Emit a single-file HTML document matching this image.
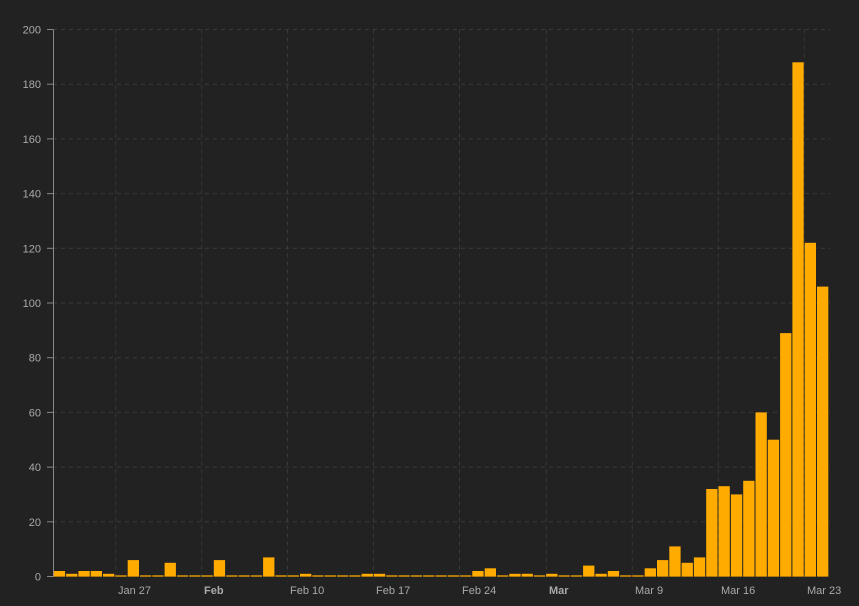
<!DOCTYPE html><html><head><style>html,body{margin:0;background:#222;}svg{display:block}text{font-family:"Liberation Sans",sans-serif;font-size:11px;fill:#a9a9a9}</style></head><body>
<svg width="859" height="606" viewBox="0 0 859 606">
<rect width="859" height="606" fill="#222"/>
<g stroke="#3a3a3a" stroke-dasharray="4,4" stroke-width="1">
<line x1="53" x2="830" y1="29.5" y2="29.5"/><line x1="53" x2="830" y1="84.2" y2="84.2"/><line x1="53" x2="830" y1="138.9" y2="138.9"/><line x1="53" x2="830" y1="193.6" y2="193.6"/><line x1="53" x2="830" y1="248.3" y2="248.3"/><line x1="53" x2="830" y1="303" y2="303"/><line x1="53" x2="830" y1="357.7" y2="357.7"/><line x1="53" x2="830" y1="412.4" y2="412.4"/><line x1="53" x2="830" y1="467.1" y2="467.1"/><line x1="53" x2="830" y1="521.8" y2="521.8"/>
<line x1="115.7" x2="115.7" y1="29.5" y2="582"/><line x1="201.7" x2="201.7" y1="29.5" y2="582"/><line x1="287.5" x2="287.5" y1="29.5" y2="582"/><line x1="373.5" x2="373.5" y1="29.5" y2="582"/><line x1="459.5" x2="459.5" y1="29.5" y2="582"/><line x1="546.3" x2="546.3" y1="29.5" y2="582"/><line x1="632.3" x2="632.3" y1="29.5" y2="582"/><line x1="718.3" x2="718.3" y1="29.5" y2="582"/><line x1="804.3" x2="804.3" y1="29.5" y2="582"/>
</g>
<g stroke="#888" stroke-width="1"><line x1="53.5" x2="53.5" y1="29.5" y2="577"/>
<line x1="47" x2="53" y1="29.5" y2="29.5"/><line x1="47" x2="53" y1="84.2" y2="84.2"/><line x1="47" x2="53" y1="138.9" y2="138.9"/><line x1="47" x2="53" y1="193.6" y2="193.6"/><line x1="47" x2="53" y1="248.3" y2="248.3"/><line x1="47" x2="53" y1="303" y2="303"/><line x1="47" x2="53" y1="357.7" y2="357.7"/><line x1="47" x2="53" y1="412.4" y2="412.4"/><line x1="47" x2="53" y1="467.1" y2="467.1"/><line x1="47" x2="53" y1="521.8" y2="521.8"/><line x1="47" x2="53" y1="576.5" y2="576.5"/></g>
<g text-anchor="end">
<text x="41" y="33.5">200</text><text x="41" y="88.2">180</text><text x="41" y="142.9">160</text><text x="41" y="197.6">140</text><text x="41" y="252.3">120</text><text x="41" y="307">100</text><text x="41" y="361.7">80</text><text x="41" y="416.4">60</text><text x="41" y="471.1">40</text><text x="41" y="525.8">20</text><text x="41" y="580.5">0</text>
</g>
<g>
<text x="118" y="594">Jan 27</text><text x="204" y="594" font-weight="bold">Feb</text><text x="290" y="594">Feb 10</text><text x="376" y="594">Feb 17</text><text x="462" y="594">Feb 24</text><text x="549" y="594" font-weight="bold">Mar</text><text x="635" y="594">Mar 9</text><text x="721" y="594">Mar 16</text><text x="807" y="594">Mar 23</text>
</g>
<line x1="53.8" x2="829" y1="576" y2="576" stroke="#ffab00" stroke-width="1.2" stroke-dasharray="11.3,1.01"/>
<g fill="#ffab00">
<rect x="53.8" y="571" width="11.3" height="5.5"/>
<rect x="66.1" y="573.8" width="11.3" height="2.7"/>
<rect x="78.4" y="571" width="11.3" height="5.5"/>
<rect x="90.7" y="571" width="11.3" height="5.5"/>
<rect x="103.0" y="573.8" width="11.3" height="2.7"/>
<rect x="127.7" y="560.1" width="11.3" height="16.4"/>
<rect x="164.6" y="562.8" width="11.3" height="13.7"/>
<rect x="213.8" y="560.1" width="11.3" height="16.4"/>
<rect x="263.1" y="557.4" width="11.3" height="19.1"/>
<rect x="300.0" y="573.8" width="11.3" height="2.7"/>
<rect x="361.6" y="573.8" width="11.3" height="2.7"/>
<rect x="373.9" y="573.8" width="11.3" height="2.7"/>
<rect x="472.3" y="571" width="11.3" height="5.5"/>
<rect x="484.7" y="568.3" width="11.3" height="8.2"/>
<rect x="509.3" y="573.8" width="11.3" height="2.7"/>
<rect x="521.6" y="573.8" width="11.3" height="2.7"/>
<rect x="546.2" y="573.8" width="11.3" height="2.7"/>
<rect x="583.1" y="565.6" width="11.3" height="10.9"/>
<rect x="595.4" y="573.8" width="11.3" height="2.7"/>
<rect x="607.8" y="571" width="11.3" height="5.5"/>
<rect x="644.7" y="568.3" width="11.3" height="8.2"/>
<rect x="657.0" y="560.1" width="11.3" height="16.4"/>
<rect x="669.3" y="546.4" width="11.3" height="30.1"/>
<rect x="681.6" y="562.8" width="11.3" height="13.7"/>
<rect x="693.9" y="557.4" width="11.3" height="19.1"/>
<rect x="706.2" y="489" width="11.3" height="87.5"/>
<rect x="718.5" y="486.2" width="11.3" height="90.3"/>
<rect x="730.9" y="494.4" width="11.3" height="82.1"/>
<rect x="743.2" y="480.8" width="11.3" height="95.7"/>
<rect x="755.5" y="412.4" width="11.3" height="164.1"/>
<rect x="767.8" y="439.7" width="11.3" height="136.8"/>
<rect x="780.1" y="333.1" width="11.3" height="243.4"/>
<rect x="792.4" y="62.3" width="11.3" height="514.2"/>
<rect x="804.7" y="242.8" width="11.3" height="333.7"/>
<rect x="817.0" y="286.6" width="11.3" height="289.9"/>
</g>
</svg>
</body></html>
